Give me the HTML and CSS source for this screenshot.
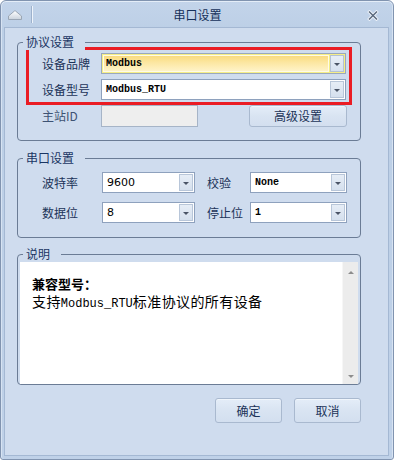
FILE: index.html
```html
<!DOCTYPE html>
<html lang="zh-CN">
<head>
<meta charset="utf-8">
<title>串口设置</title>
<link rel="stylesheet" href="styles.css">
</head>
<body>
<div class="window">
  <div class="titlebar">
    <div class="tb-left">
      <svg class="tb-icon" width="16" height="11" viewBox="0 0 16 11">
        <defs>
          <linearGradient id="ig" x1="0" y1="0" x2="0" y2="1">
            <stop offset="0" stop-color="#ffffff"/>
            <stop offset="1" stop-color="#c9d2dc"/>
          </linearGradient>
        </defs>
        <path d="M1.5 9.5 L1.5 6 L7.5 1 L8.5 1 L14.5 6 L14.5 9.5 Z" fill="url(#ig)" stroke="#9aa6b4" stroke-width="1" stroke-linejoin="round"/>
      </svg>
      <span class="tb-sep"></span>
    </div>
    <div class="tb-title">串口设置</div>
    <div class="tb-close">
      <svg width="12" height="11" viewBox="0 0 12 11">
        <path d="M2.5 2 L9.5 9 M9.5 2 L2.5 9" stroke="#eef3fa" stroke-width="3.2" stroke-linecap="square"/>
        <path d="M2.5 2 L9.5 9 M9.5 2 L2.5 9" stroke="#5a687b" stroke-width="1.4" stroke-linecap="square"/>
      </svg>
    </div>
  </div>

  <div class="client">
    <section class="group g1">
      <div class="group-title">协议设置</div>
      <div class="highlight">
        <div class="row hl-row">
          <span class="lbl">设备品牌</span>
          <div class="combo active w-wide">
            <span class="combo-text mono">Modbus</span>
            <span class="combo-btn"><i class="arrow"></i></span>
          </div>
        </div>
        <div class="row hl-row">
          <span class="lbl">设备型号</span>
          <div class="combo w-wide">
            <span class="combo-text mono">Modbus_RTU</span>
            <span class="combo-btn"><i class="arrow"></i></span>
          </div>
        </div>
      </div>
      <div class="row id-row">
        <span class="lbl lbl-dim">主站ID</span>
        <div class="input-disabled"></div>
        <button class="btn btn-adv">高级设置</button>
      </div>
    </section>

    <section class="group g2">
      <div class="group-title">串口设置</div>
      <div class="row serial-row">
        <span class="lbl lbl-a">波特率</span>
        <div class="combo w-a">
          <span class="combo-text sans">9600</span>
          <span class="combo-btn"><i class="arrow"></i></span>
        </div>
        <span class="lbl lbl-b">校验</span>
        <div class="combo w-b">
          <span class="combo-text mono">None</span>
          <span class="combo-btn"><i class="arrow"></i></span>
        </div>
      </div>
      <div class="row serial-row">
        <span class="lbl lbl-a">数据位</span>
        <div class="combo w-a">
          <span class="combo-text sans">8</span>
          <span class="combo-btn"><i class="arrow"></i></span>
        </div>
        <span class="lbl lbl-b">停止位</span>
        <div class="combo w-b">
          <span class="combo-text mono">1</span>
          <span class="combo-btn"><i class="arrow"></i></span>
        </div>
      </div>
    </section>

    <section class="group g3">
      <div class="group-title">说明</div>
      <div class="desc">
        <div class="desc-text">
          <div class="desc-head">兼容型号：</div>
          <div class="desc-body">支持<span class="latin">Modbus_RTU</span>标准协议的所有设备</div>
        </div>
        <div class="scroll">
          <i class="sarrow up"></i>
          <i class="sarrow down"></i>
        </div>
      </div>
    </section>

    <div class="actions">
      <button class="btn btn-act">确定</button>
      <button class="btn btn-act">取消</button>
    </div>
  </div>
</div>
</body>
</html>
```

FILE: styles.css
```css
* { box-sizing: border-box; }

html, body {
  margin: 0;
  padding: 0;
  background: #ffffff;
}

body {
  font-family: "Noto Sans CJK SC", "Noto Sans", sans-serif;
  font-size: 12px;
  color: #1b3358;
}

.window {
  width: 394px;
  height: 460px;
  border: 1px solid #8194b0;
  border-radius: 6px 6px 3px 3px;
  background: linear-gradient(#c3d4ea, #bccfe6 30px, #bfd1e8);
  box-shadow: inset 0 1px 0 #e4edf8, inset 1px 0 0 #d7e3f2, inset -1px 0 0 #d7e3f2;
  display: flex;
  flex-direction: column;
  padding: 0 4px 3px 3px;
}

/* ---------- title bar ---------- */
.titlebar {
  height: 26px;
  display: grid;
  grid-template-columns: 1fr auto 1fr;
  align-items: center;
}

.tb-left {
  display: flex;
  align-items: center;
  padding-left: 3px;
  gap: 8px;
}

.tb-icon { display: block; margin-top: 2px; }

.tb-sep {
  width: 2px;
  height: 17px;
  border-left: 1px solid #9db1cc;
  border-right: 1px solid #eef4fb;
  margin-top: 1px;
}

.tb-title {
  font-size: 12px;
  color: #15305a;
  line-height: 16px;
  padding-top: 2px;
  padding-left: 2px;
}

.tb-close {
  justify-self: end;
  padding-right: 10px;
  padding-top: 3px;
  display: flex;
}

/* ---------- client ---------- */
.client {
  flex: 1;
  background: #cfdcee;
  border: 1px solid #a4b8d3;
  padding: 14px 27px 0 12px;
  display: flex;
  flex-direction: column;
}

.group {
  position: relative;
  border: 1px solid #6b7c95;
  border-radius: 4px;
}

.group-title {
  position: absolute;
  top: -9px;
  left: 5px;
  padding: 0 11px 0 3px;
  background: #cfdcee;
  line-height: 16px;
  color: #1a3563;
}

.g1 { height: 99px; }
.g2 { height: 80px; margin-top: 17px; padding-top: 13px; }
.g3 { height: 131px; margin-top: 16px; display: flex; flex-direction: column; }

.row {
  display: flex;
  align-items: center;
}

.lbl {
  color: #1b3358;
  line-height: 16px;
  white-space: nowrap;
}

.lbl-dim { color: #3d5273; }

/* highlight (red annotation box) */
.highlight {
  margin: 4px 8px 0 8px;
  border: 3px solid #ea1c24;
  padding: 3px 2px 2px 13px;
  display: flex;
  flex-direction: column;
  gap: 5px;
}

.hl-row .lbl { width: 59px; }

.id-row {
  height: 22px;
  padding: 0 13px 0 24px;
}
.id-row .lbl { width: 59px; }

.input-disabled {
  width: 97px;
  height: 22px;
  background: #eeeeee;
  border: 1px solid #a6b4c7;
}

/* ---------- combo ---------- */
.combo {
  height: 21px;
  display: flex;
  border: 1px solid #8ea1bd;
  background: #ffffff;
  padding: 1px;
}

.w-wide { width: 245px; }
.w-a { width: 93px; }
.w-b { width: 97px; }

.combo-text {
  flex: 1;
  line-height: 17px;
  padding-left: 3px;
  color: #000000;
  white-space: nowrap;
  overflow: hidden;
}

.mono {
  font-family: "Liberation Mono", "DejaVu Sans Mono", monospace;
  font-size: 10px;
  font-weight: bold;
}

.sans {
  font-family: "DejaVu Sans", "Liberation Sans", sans-serif;
  font-size: 11px;
}

.combo-btn {
  width: 14px;
  margin-left: 1px;
  border: 1px solid #b8c6d9;
  background: linear-gradient(#e6edf6, #d5e0ee);
  display: flex;
  align-items: center;
  justify-content: center;
}

.arrow {
  display: block;
  width: 0;
  height: 0;
  border-left: 3px solid transparent;
  border-right: 3px solid transparent;
  border-top: 3px solid #4a5466;
  margin-top: 1px;
}

.combo.active {
  border-color: #9aa8bd;
  background: #f6ee86;
  padding: 1px;
}
.combo.active .combo-text {
  background: linear-gradient(#f9d97a, #fce7a2 45%, #fff4cc);
  box-shadow: inset 0 0 0 1px #fffbe6;
}
.combo.active .combo-btn {
  border-color: #b4c2d4;
  background: linear-gradient(#e7eef7, #d6e1ef);
}

/* ---------- serial group ---------- */
.serial-row {
  height: 21px;
  padding-left: 24px;
}
.serial-row + .serial-row { margin-top: 9px; }
.lbl-a { width: 60px; }
.lbl-b { width: 43px; margin-left: 12px; }

/* ---------- description ---------- */
.desc {
  flex: 1;
  margin: 7px 2px 0 2px;
  background: #ffffff;
  display: flex;
}

.desc-text {
  flex: 1;
  padding: 13px 0 0 12px;
  color: #000000;
}

.desc-head {
  font-weight: bold;
  font-size: 13px;
  line-height: 17px;
}

.desc-body {
  font-size: 14px;
  line-height: 18px;
  letter-spacing: 0.4px;
}

.latin {
  font-family: "Liberation Mono", "DejaVu Sans Mono", monospace;
  font-size: 12px;
  letter-spacing: 0;
}

.scroll {
  width: 16px;
  background: #ececec;
  border-left: 1px solid #f6f6f6;
  display: flex;
  flex-direction: column;
  justify-content: space-between;
  align-items: center;
  padding: 9px 0 6px;
}

.sarrow {
  display: block;
  width: 0;
  height: 0;
  border-left: 3px solid transparent;
  border-right: 3px solid transparent;
}
.sarrow.up { border-bottom: 3px solid #8d8d8d; }
.sarrow.down { border-top: 3px solid #8d8d8d; }

/* ---------- buttons ---------- */
.btn {
  font-family: "Noto Sans CJK SC", "Noto Sans", sans-serif;
  font-size: 12px;
  color: #1b3358;
  border: 1px solid #a9b9cf;
  border-radius: 3px;
  background: linear-gradient(#e4edf8, #d9e4f2 50%, #d3dfef);
  box-shadow: inset 0 1px 0 #f0f5fb;
  padding: 0;
  line-height: 16px;
}

.btn-adv {
  width: 98px;
  height: 22px;
  margin-left: auto;
}

.actions {
  display: flex;
  justify-content: flex-end;
  gap: 12px;
  margin-top: 13px;
}

.btn-act {
  width: 67px;
  height: 25px;
}
```
